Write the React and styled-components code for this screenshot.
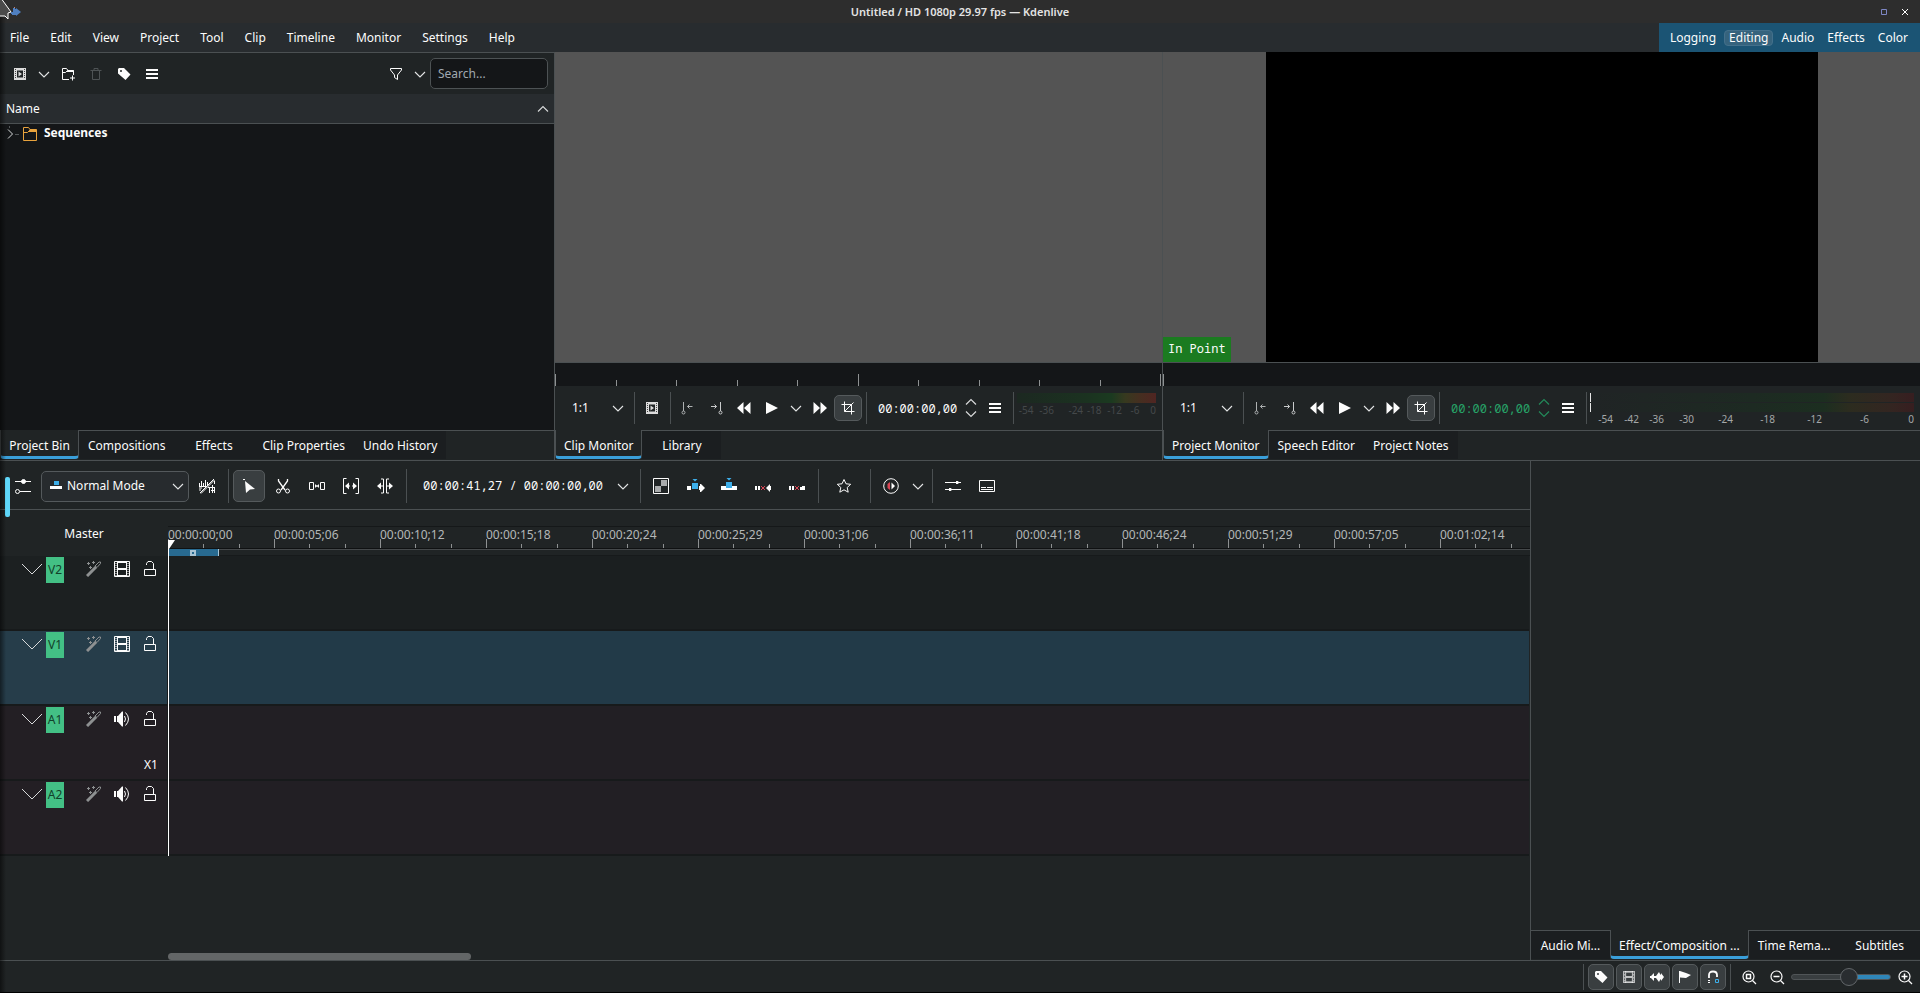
import React from "react";
import styled, { createGlobalStyle, css } from "styled-components";

const colour = {
  window: "#202425",
  header: "#282c2f",
  view: "#141618",
  line: "#4b5052",
  text: "#fcfcfc",
  muted: "#a1a9b1",
  accent: "#3a9fd9",
  green: "#43c085",
};

const mono = '"Noto Sans Mono", "DejaVu Sans Mono", monospace';

const GlobalStyle = createGlobalStyle`
  *, *::before, *::after {
    box-sizing: border-box;
  }
  body {
    margin: 0;
    background: ${colour.window};
    color: ${colour.text};
    font-family: "Noto Sans", sans-serif;
    font-size: 12px;
    line-height: 16px;
  }
  button, input, select {
    margin: 0;
    padding: 0;
    border: none;
    outline: none;
    background: transparent;
    color: inherit;
    font: inherit;
  }
  svg {
    display: block;
    flex: none;
  }
`;

/* ---------- window ---------- */

const Window = styled.div`
  position: relative;
  display: flex;
  flex-direction: column;
  height: 100vh;
  overflow: hidden;
  border-bottom: 1px solid #000;

  &::after {
    content: "";
    position: absolute;
    inset: 0 auto 0 0;
    width: 6px;
    background: linear-gradient(to right, rgba(0, 0, 0, 0.5), transparent);
    pointer-events: none;
  }
`;

const TitleBar = styled.header`
  display: grid;
  grid-template-columns: 1fr auto 1fr;
  align-items: center;
  height: 23px;
  padding: 0 7px;
  background: #2d2d2d;
  flex: none;
`;

const WindowTitle = styled.h1`
  margin: 0;
  font-size: 11px;
  font-weight: 600;
  color: #e4e4e4;
`;

const WindowButtons = styled.div`
  display: flex;
  justify-content: flex-end;
  gap: 5px;
`;

const WindowButton = styled.button`
  display: grid;
  place-items: center;
  width: 16px;
  height: 16px;
  color: ${props => props.$tint || "#fff"};
`;

const Pointer = styled.svg`
  position: absolute;
  top: 0;
  left: 0;
  z-index: 2;
`;

const MenuBar = styled.nav`
  display: flex;
  height: 29px;
  background: ${colour.header};
  flex: none;
`;

const MenuItem = styled.button`
  padding: 0 10px 0 11px;

  &:first-child {
    padding-left: 10px;
  }
`;

const Workspaces = styled.div`
  display: flex;
  align-items: center;
  gap: 3px;
  margin-left: auto;
  padding: 0 7px 0 6px;
  background: #1b5474;
`;

const Workspace = styled.button`
  height: 16px;
  padding: 0 4px;
  border: 1px solid ${props => (props.$active ? "#43708b" : "transparent")};
  border-radius: 4px;
  line-height: 14px;
  background: ${props => (props.$active ? "#36637d" : "transparent")};
`;

/* ---------- shared parts ---------- */

const IconButton = styled.button`
  display: grid;
  place-items: center;
  flex: none;
  width: ${props => props.$width || 28}px;
  height: ${props => props.$height || 26}px;
  border-radius: 5px;
  border: 1px solid transparent;
  color: ${props => props.$tint || colour.text};
  ${props => props.$active && css`
    border-color: #555a5c;
    background: #393e40;
  `}
`;

const Separator = styled.span`
  flex: none;
  width: 1px;
  height: ${props => props.$height || 32}px;
  margin: 0 3px 0 4px;
  background: ${colour.line};
`;

const TabStrip = styled.div`
  display: flex;
  flex: none;
  height: 30px;
  padding-bottom: 1px;
  border-top: 1px solid ${colour.line};
`;

const Tab = styled.button`
  min-width: 79px;
  padding: 1px 9px 0;
  flex: none;
  background: #1b1e20;
  white-space: nowrap;
  ${props => props.$active && css`
    margin-top: -1px;
    padding: 5px 8px 0;
    border: 1px solid ${colour.line};
    border-top: none;
    border-bottom: 3px solid ${colour.accent};
    border-radius: 0 0 4px 4px;
    background: ${colour.window};
  `}
`;

const Combo = styled.label`
  position: relative;
  display: flex;
  align-items: center;
  flex: none;
  width: ${props => props.$width}px;
  height: ${props => (props.$framed ? 31 : 26)}px;
  border-radius: 5px;
  border: 1px solid ${props => (props.$framed ? "#54595c" : "transparent")};
  background: ${props => (props.$framed ? "#272b2e" : "transparent")};

  select {
    width: 100%;
    height: 100%;
    padding-left: ${props => (props.$framed ? 25 : 12)}px;
    appearance: none;
  }
  option {
    background: ${colour.window};
  }
  svg {
    position: absolute;
    pointer-events: none;
  }
  svg:first-child:not(:last-child) {
    left: 6px;
  }
  svg:last-child {
    right: ${props => (props.$framed ? 2 : 3)}px;
  }
`;

/* ---------- icons ---------- */

const Icon = ({size = 16, children, ...rest}) => (
  <svg width={size} height={size} viewBox="0 0 16 16" fill="none" stroke="currentColor" aria-hidden="true" {...rest}>
    {children}
  </svg>
);

const ChevronDown = () => <Icon stroke="#e4e6e7" strokeWidth="1.1"><path d="M3 6l5 5 5-5" /></Icon>;

const SequenceIcon = () => (
  <Icon stroke="none">
    <path fill="#dcdcdc" fillRule="evenodd" d="M2 2h12v12H2zM5 4.5v7h6v-7z" />
    <path fill="#dcdcdc" d="M6.5 5.5 10 8l-3.500 2.500z" />
    <path stroke="#444" strokeDasharray="1 1" d="M3.500 3v10M12.500 3v10" />
  </Icon>
);

const AddFolderIcon = () => (
  <Icon>
    <path d="M9 13.500H2.500v-11h4l1.500 2h5.500V9M2.500 6.500h3l2-2" />
    <path fill="currentColor" stroke="none" d="M7.500 4h6v2h-7z" />
    <path d="M12.500 9.500v5M10 12h5" />
  </Icon>
);

const TrashIcon = () => (
  <Icon><path d="M2.500 4.500h11M6 4.500v-2h4v2M4.500 4.500v9h7v-9" /></Icon>
);

const TagIcon = () => (
  <Icon>
    <path fill="currentColor" stroke="none" fillRule="evenodd" d="M2 3l1-1h5l6.500 6.500-5 5.500L2 7.500zM4 5a1 1 0 1 0 2 0a1 1 0 1 0-2 0z" />
  </Icon>
);

const MenuIcon = () => (
  <Icon fill="currentColor" stroke="none"><path d="M2 3h12v2H2zM2 7h12v2H2zM2 11h12v2H2z" /></Icon>
);

const FilterIcon = () => (
  <Icon><path d="M2.500 2.500h11v1.500L9.500 9v4.500l-3-2V9L2.500 4z" /></Icon>
);

const FolderIcon = () => (
  <Icon stroke="#e8a33d">
    <path d="M1.500 1.500h5l1.500 2h6.500v11h-13z" />
    <path d="M1.500 6.500h4l2-2h7" strokeWidth="1" />
    <path fill="#e8a33d" stroke="none" d="M7.500 3.500h7v2.500h-8z" />
  </Icon>
);

const SetInIcon = () => (
  <Icon stroke="#aeb1b2">
    <path d="M3.500 2v9" /><circle cx="3.500" cy="12.500" r="1.500" />
    <path d="M12.500 6.500h-5M9.500 4.500l-2 2 2 2" />
  </Icon>
);

const SetOutIcon = () => (
  <Icon stroke="#c9cbcc">
    <path d="M12.500 2v9" /><circle cx="12.500" cy="12.500" r="1.500" />
    <path d="M3 6.500h5.500M6.500 4.500l2 2-2 2" />
  </Icon>
);

const RewindIcon = () => (
  <Icon fill="currentColor" stroke="none"><path d="M1 8l6.500-6v12zM8 8l6.500-6v12z" /></Icon>
);

const PlayIcon = () => (
  <Icon fill="currentColor" stroke="none"><path d="M2 2 14 8 2 14z" /></Icon>
);

const ForwardIcon = () => (
  <Icon fill="currentColor" stroke="none"><path d="M15 8 8.500 2v12zM8 8 1.500 2v12z" /></Icon>
);

const CropIcon = () => (
  <Icon><path d="M4.500 1.500v10h10M1.500 4.500h10v10M4.500 11.500l9-9" /></Icon>
);

const StepperIcon = () => (
  <svg width="14" height="20" viewBox="0 0 14 20" fill="none" stroke="currentColor" strokeWidth="1.200" aria-hidden="true">
    <path d="M2 6.500l5-5 5 5M2 13.500l5 5 5-5" />
  </svg>
);

const TrackOptionsIcon = () => (
  <Icon>
    <path d="M0 3.500h16M5 13.500h11" />
    <circle cx="8.500" cy="3.500" r="2" fill="currentColor" />
    <circle cx="2.500" cy="13.500" r="2" />
  </Icon>
);

const NormalModeIcon = () => (
  <Icon stroke="none"><path fill="#3daee9" d="M6 3h5v4H6z" /><path fill="#fff" d="M2 8h12v3H2z" /></Icon>
);

const WaveOffIcon = () => (
  <Icon strokeWidth="1">
    <path d="M.5 5v3M2.500 3v5M4.500 5v3M6.500 2v6M8.500 4v3M0 8.500h8M1 15 15 1M2 15.500 15.500 2M9 9.500h7M10.500 9v6M13.500 7v8M15.500 9v6M12 12.500h3M15.500 3v3" />
    <path d="M0 10h3M0 12h2" />
  </Icon>
);

const SelectIcon = () => (
  <Icon fill="currentColor" stroke="none"><path d="M4 3l10 8-5 .5L5 15zM2 1h2v1H2z" /></Icon>
);

const RazorIcon = () => (
  <Icon>
    <path d="M3.500 1v2l6.500 9M12.500 1v2L6 12" strokeWidth="1.300" />
    <circle cx="3.500" cy="13" r="2" /><circle cx="12.500" cy="13" r="2" />
  </Icon>
);

const SpacerIcon = () => (
  <Icon>
    <path d="M.5 4.500h4v7h-4zM11.500 4.500h4v7h-4zM6 8h4" />
    <path fill="currentColor" stroke="none" d="M6 6l2 2-2 2zM10 6 8 8l2 2z" />
  </Icon>
);

const SlipIcon = () => (
  <Icon>
    <path d="M3.500.5h-3v15h3M12.500.5h3v15h-3M4 8h3M9 8h3" />
    <path fill="currentColor" stroke="none" d="M2 8l4-3.500v7zM14 8l-4-3.500v7z" />
  </Icon>
);

const RippleIcon = () => (
  <Icon>
    <path d="M4 1h2.500v14H4M12 1H9.500v14H12M4 8h2M10 8h2" />
    <path fill="currentColor" stroke="none" d="M0 8l4-3.500v7zM16 8l-4-3.500v7z" />
  </Icon>
);

const CompositeIcon = () => (
  <Icon>
    <path d="M.5.5h15v15H.5z" /><path fill="#a9abac" stroke="none" d="M8 2h6v6H8zM2 8h6v6H2z" />
  </Icon>
);

const InsertIcon = () => (
  <Icon stroke="none" overflow="visible">
    <path fill="#fff" d="M0 8h4v4H0zM12 8h1V6h1l4 4-4 4h-1v-2h-1z" /><path fill="#3daee9" d="M5 5h6v6H5zM5.500 1h5L8 3.500z" />
  </Icon>
);

const OverwriteIcon = () => (
  <Icon stroke="none">
    <path fill="#fff" d="M0 8h16v4H0z" /><path fill="#3daee9" d="M5 4h6v6H5zM5.500 0h5L8 2.500z" />
  </Icon>
);

const ExtractIcon = () => (
  <Icon stroke="none">
    <path fill="#fff" d="M0 8h2v4H0zM3 8h2v4H3zM11 10l4-4v2h1v4h-1v2z" /><path stroke="#da4453" d="M6 8l4 4M10 8l-4 4" />
  </Icon>
);

const LiftIcon = () => (
  <Icon stroke="none">
    <path fill="#fff" d="M0 8h2v4H0zM3 8h2v4H3zM11 9h2V8h3v4h-5z" /><path stroke="#da4453" d="M6 8l4 4M10 8l-4 4" />
  </Icon>
);

const StarIcon = () => (
  <Icon><path d="M8 1.500l2 4.300 4.700.5-3.500 3.200 1 4.700L8 11.800l-4.200 2.400 1-4.700L1.300 6.300 6 5.800z" /></Icon>
);

const PreviewIcon = () => (
  <Icon>
    <circle cx="8" cy="8" r="7.300" />
    <path fill="#da4453" stroke="none" d="M7 4v8L4.500 10V6z" /><path fill="#fff" stroke="none" d="M8.500 4.500 12 8l-3.500 3.500z" />
  </Icon>
);

const MixerIcon = () => (
  <Icon>
    <path d="M0 4.500h16M0 11.500h16" />
    <path fill="currentColor" stroke="none" d="M11 3h2l1 1.500L13 6h-2zM4 10h2l1 1.500L6 13H4z" />
  </Icon>
);

const SubtitleIcon = () => (
  <Icon><path d="M.5 2.500h15v11H.5zM2 9.500h5M8 9.500h6M2 11.500h12" /></Icon>
);

const WandIcon = () => (
  <Icon stroke="#8d9091">
    <path d="M1 15 10 6" strokeWidth="3" /><path d="M9 5l4-4h1.500v1.500L11 6.500z" />
    <path d="M2.500 1v3M1 2.500h3M7.500 0v3M6 1.500h3M4.500 5v3M3 6.500h3" />
  </Icon>
);

const FilmIcon = ({size}) => (
  <Icon size={size}>
    <path d="M.5.500h15v15H.5zM3.500 0v16M12.500 0v16M4 7.500h8M4 8.500h8M4 1.500h8M4 14.500h8" />
    <path d="M2 2v13M14 2v13" strokeDasharray="1 1" />
  </Icon>
);

const SpeakerIcon = () => (
  <Icon>
    <path fill="currentColor" stroke="none" d="M0 5h2v6H0zM3 5h1l4-4.500h1v15H8L4 11H3z" />
    <path d="M10.500 5q2 3 0 6M11.500 1.500q6 6.500 0 13" />
  </Icon>
);

const UnlockIcon = () => (
  <Icon><path d="M2.500 8.500h11v6h-11zM4.500 4V2.500L6 .500h3.500l2 2v6" /></Icon>
);

const WaveformIcon = () => (
  <Icon fill="currentColor" stroke="none">
    <path d="M1 7h1l3-3v3h2v2H5v3L2 9H1zM7 7l3-4 1 2 1 1V4l3 4-3 4v-2l-1 1-1 2-3-4z" />
  </Icon>
);

const FlagIcon = () => (
  <Icon fill="currentColor" stroke="none"><path d="M2 2h1l6 2 5 2-5 3-6-.5V14H2z" /></Icon>
);

const SnapIcon = () => (
  <Icon>
    <path d="M4 9V6q0-3.500 4-3.500T12 6v2" strokeWidth="1.800" /><path d="M3 11.500h2M3 13.500h2" />
    <path stroke="#3daee9" d="M10.500 10.500h3v3h-3z" />
  </Icon>
);

const ZoomIcon = ({mark}) => (
  <Icon>
    <circle cx="7.500" cy="7.500" r="5.500" strokeWidth="1.200" />
    <path d="M11.500 11.500 15 15" strokeWidth="1.300" />
    <path d={mark} strokeWidth="1.500" />
  </Icon>
);

/* ---------- project bin ---------- */

const TopArea = styled.div`
  display: grid;
  grid-template-columns: 555fr 608fr 757fr;
  flex: 409 1 0;
  min-height: 0;
  border-bottom: 1px solid ${colour.line};
`;

const Panel = styled.section`
  display: flex;
  flex-direction: column;
  min-width: 0;
  min-height: 0;
  border-right: 1px solid ${colour.line};

  &:last-child {
    border-right: none;
  }
`;

const BinToolbar = styled.div`
  display: flex;
  align-items: center;
  flex: none;
  height: 42px;
  padding: 0 6px;
  border-top: 1px solid ${colour.line};
`;

const Search = styled.input`
  width: 118px;
  height: 31px;
  padding: 0 7px;
  border: 1px solid #4d5254;
  border-radius: 5px;
  background: ${colour.view};

  &::placeholder {
    color: ${colour.muted};
    opacity: 1;
  }
`;

const Spacer = styled.span`
  flex: 1;
`;

const ColumnHeader = styled.button`
  display: flex;
  align-items: center;
  justify-content: space-between;
  flex: none;
  height: 30px;
  padding: 1px 3px 0 6px;
  border-bottom: 1px solid ${colour.line};
  background: ${colour.header};
`;

const Tree = styled.ul`
  flex: 1;
  margin: 0;
  padding: 0;
  list-style: none;
  background: ${colour.view};
`;

const TreeItem = styled.li`
  display: flex;
  align-items: center;
  gap: 3px;
  height: 20px;
  padding-left: 3px;
  font-weight: 700;

  span {
    padding: 0 0 2px 3px;
  }
`;

/* ---------- monitors ---------- */

const Screen = styled.div`
  display: flex;
  align-items: flex-end;
  flex: 1;
  min-height: 0;
  background: #545454;
`;

const Frame = styled.div`
  width: 73%;
  height: 100%;
  background: #000;
`;

const ScreenSide = styled.div`
  display: flex;
  flex: ${props => props.$grow};
`;

const InPoint = styled.span`
  height: 25px;
  padding: 4px 5px;
  background: #1b7b20;
  font-family: ${mono};
`;

const MonitorRuler = styled.div`
  display: flex;
  align-items: flex-end;
  flex: none;
  height: 24px;
  padding-right: 1px;
  border-top: 1px solid ${colour.line};
  background: ${colour.view};
`;

const RulerStep = styled.span`
  flex: 1;
  height: ${props => (props.$major ? 12 : 6)}px;
  border-left: 1px solid #8e9192;
`;

const RulerEnd = styled.span`
  height: 12px;
  border-left: 1px solid #8e9192;
`;

const MonitorToolbar = styled.div`
  display: flex;
  align-items: center;
  flex: none;
  height: 44px;
  padding: 0 6px 0 4px;
`;

const Timecode = styled.input`
  flex: none;
  width: 91px;
  height: 26px;
  padding-left: 8px;
  font-family: ${mono};
  color: ${props => props.$tint};
`;

const Meter = styled.div`
  flex: 1;
  min-width: 0;
  height: ${props => (props.$stereo ? 33 : 30)}px;
  margin-top: ${props => (props.$stereo ? 2 : 0)}px;
  color: ${props => (props.$stereo ? "#a4a7a8" : "#44484a")};
`;

const MeterBar = styled.div`
  height: ${props => (props.$stereo ? 9 : 10)}px;
  margin-bottom: 1px;
  background: ${props => (props.$stereo
    ? "linear-gradient(to right, #202425, #1d2a22 50%, #1c2e20 72%, #2c2c1f 80%, #332621 92%, #371e20)"
    : "linear-gradient(to right, #1c2821, #1b3220 50%, #1b3a20 68%, #37391f 78%, #452f20 88%, #502522)")};
  border-left: ${props => (props.$stereo ? "1px solid #e6e6e6" : "none")};
`;

const MeterScale = styled.div`
  display: flex;
  font-size: 10px;
  line-height: 13px;
`;

const MeterMark = styled.span`
  flex: ${props => props.$grow} 1 0;
  min-width: 0;
  text-align: right;
  white-space: nowrap;
`;

/* ---------- timeline ---------- */

const BottomArea = styled.div`
  display: grid;
  grid-template-columns: 1530fr 390fr;
  flex: 500 1 0;
  min-height: 0;
  border-bottom: 1px solid ${colour.line};
`;

const Timeline = styled.section`
  position: relative;
  display: flex;
  flex-direction: column;
  min-width: 0;
`;

const FocusMark = styled.span`
  position: absolute;
  top: 16px;
  left: 5px;
  width: 5px;
  height: 40px;
  border-radius: 2px;
  background: #5fd7fa;
`;

const TimelineToolbar = styled.div`
  display: flex;
  align-items: center;
  gap: 2px;
  flex: none;
  height: 49px;
  padding: 2px 0 0 7px;
  border-bottom: 1px solid ${colour.line};

  ${Separator} {
    margin: 0 2px 0 3px;
  }
`;

const Position = styled.button`
  width: 198px;
  height: 32px;
  padding-left: 12px;
  font-family: ${mono};
  text-align: left;
  white-space: pre;
`;

const RulerRow = styled.div`
  display: grid;
  grid-template-columns: 168px 1fr;
  flex: none;
  padding-top: 16px;
`;

const Master = styled.button`
  height: 16px;
`;

const Ruler = styled.div`
  min-width: 0;
  border-top: 1px solid #151819;
`;

const RulerMarks = styled.div`
  display: flex;
  overflow: hidden;
  height: 22px;
  border-bottom: 1px solid #0f1112;
`;

const RulerMark = styled.span`
  flex: none;
  width: 106px;
  height: 21px;
  line-height: 15px;
  color: #b4b7b8;
  background:
    linear-gradient(#8e9192, #8e9192) 0 100% / 1px 9px no-repeat,
    linear-gradient(#8e9192, #8e9192) 35px 100% / 1px 4px no-repeat,
    linear-gradient(#8e9192, #8e9192) 71px 100% / 1px 4px no-repeat;
`;

const ZoneBar = styled.div`
  height: 7px;
  border-top: 1px solid #45494b;
  border-bottom: 1px solid #171a1b;
`;

const Zone = styled.div`
  display: flex;
  align-items: center;
  justify-content: center;
  width: 51px;
  height: 7px;
  margin-top: -1px;
  border-right: 1px solid #a9c4d4;
  background: #286a90;

  &::after {
    content: "";
    width: 6px;
    height: 6px;
    border: 2px solid #a9c4d4;
  }
`;

const Tracks = styled.div`
  position: relative;
  flex: none;
  padding-right: 1px;
`;

const TrackRow = styled.div`
  display: grid;
  grid-template-columns: 167px 1fr;
  gap: 1px;
  height: 75px;
  border-bottom: 2px solid #171a1b;
  background: #171a1b;
`;

const trackFill = {
  video: ["#1c2021", "#1b1f20"],
  active: ["#263d4a", "#223a48"],
  audio: ["#231f24", "#221f24"],
};

const TrackHeader = styled.div`
  display: grid;
  grid-template-columns: 28px 18px 16px 28px 28px 28px;
  grid-template-rows: 27px 1fr;
  padding-left: 18px;
  background: ${props => trackFill[props.$kind][0]};
`;

const TrackLane = styled.div`
  background: ${props => trackFill[props.$kind][1]};
`;

const TrackName = styled.button`
  height: 26px;
  margin-top: 1px;
  background: ${colour.green};
  color: #12402a;
  text-align: center;
`;

const TrackMeta = styled.span`
  grid-column: 6;
  align-self: end;
  padding: 0 0 6px 2px;
  text-align: center;
`;

const Playhead = styled.svg`
  position: absolute;
  top: 79px;
  left: 168px;
`;

const PlayheadLine = styled.span`
  position: absolute;
  top: -8px;
  bottom: 0;
  left: 168px;
  width: 1px;
  background: #fff;
`;

const ScrollBar = styled.div`
  width: 303px;
  height: 7px;
  margin: auto 0 0 168px;
  border-radius: 4px;
  background: #636667;
`;

const EffectPanel = styled.aside`
  display: flex;
  flex-direction: column;
  justify-content: flex-end;
  min-width: 0;
  overflow: hidden;
  border-left: 1px solid ${colour.line};

  ${Tab}:last-child {
    flex: 1;
  }
`;

/* ---------- status bar ---------- */

const StatusBar = styled.footer`
  display: flex;
  align-items: center;
  justify-content: flex-end;
  gap: 2px;
  flex: none;
  height: 31px;
  padding-right: 1px;

  ${Separator} {
    margin: 0 2px;
  }
`;

const ZoomGroup = styled.div`
  display: flex;
  align-items: center;
`;

const ZoomSlider = styled.input`
  width: 100px;
  height: 18px;
  appearance: none;

  &::-webkit-slider-runnable-track {
    height: 6px;
    border-radius: 3px;
    border: 1px solid #505557;
    background: linear-gradient(to right, #393e40 60%, #2f86b8 60%);
  }
  &::-webkit-slider-thumb {
    width: 18px;
    height: 18px;
    margin-top: -7px;
    border: 1px solid #62676a;
    border-radius: 50%;
    background: #292d30;
    appearance: none;
  }
`;

/* ---------- content ---------- */

const menus = ["File", "Edit", "View", "Project", "Tool", "Clip", "Timeline", "Monitor", "Settings", "Help"];
const workspaces = ["Logging", "Editing", "Audio", "Effects", "Color"];

const times = [
  "00:00:00;00", "00:00:05;06", "00:00:10;12", "00:00:15;18", "00:00:20;24", "00:00:25;29", "00:00:31;06",
  "00:00:36;11", "00:00:41;18", "00:00:46;24", "00:00:51;29", "00:00:57;05", "00:01:02;14",
];

const tracks = [
  {name: "V2", kind: "video"},
  {name: "V1", kind: "active"},
  {name: "A1", kind: "audio", meta: "X1"},
  {name: "A2", kind: "audio"},
];

const clipScale = [["-54", 17], ["-36", 21], ["-24", 30], ["-18", 19], ["-12", 21], ["-6", 18], ["0", 17]];
const projectScale = [
  ["-54", 23], ["-42", 26], ["-36", 25], ["-30", 30], ["-24", 39], ["-18", 42], ["-12", 47], ["-6", 47], ["0", 45],
];

const Tabs = ({items, active}) => (
  <TabStrip role="tablist">
    {items.map(item => (
      <Tab key={item} role="tab" aria-selected={item === active} $active={item === active}>{item}</Tab>
    ))}
  </TabStrip>
);

const AudioMeter = ({scale, stereo}) => (
  <Meter $stereo={stereo}>
    <MeterBar $stereo={stereo} />
    {stereo && <MeterBar $stereo />}
    <MeterScale>
      {scale.map(([mark, grow]) => <MeterMark key={mark} $grow={grow}>{mark}</MeterMark>)}
    </MeterScale>
  </Meter>
);

const MonitorControls = ({clip}) => (
  <MonitorToolbar>
    <Combo $width={clip ? 71 : 72}>
      <select aria-label="Monitor zoom"><option>1:1</option></select>
      <ChevronDown />
    </Combo>
    <Separator />
    {clip && <IconButton aria-label="Clip type"><SequenceIcon /></IconButton>}
    {clip && <Separator />}
    <IconButton aria-label="Set zone in"><SetInIcon /></IconButton>
    <IconButton aria-label="Set zone out"><SetOutIcon /></IconButton>
    <IconButton aria-label="Rewind"><RewindIcon /></IconButton>
    <IconButton aria-label="Play"><PlayIcon /></IconButton>
    <IconButton aria-label="Play options" $width={20}><ChevronDown /></IconButton>
    <IconButton aria-label="Forward"><ForwardIcon /></IconButton>
    <IconButton aria-label="Edit mode" $active><CropIcon /></IconButton>
    <Separator />
    <Timecode aria-label="Timecode" defaultValue="00:00:00,00" $tint={clip ? colour.text : "#27a368"} />
    <IconButton aria-label="Step timecode" $width={20} $tint={clip ? "#d8dadb" : "#238a5a"}><StepperIcon /></IconButton>
    <IconButton aria-label="Monitor menu"><MenuIcon /></IconButton>
    <Separator />
    <AudioMeter scale={clip ? clipScale : projectScale} stereo={!clip} />
  </MonitorToolbar>
);

const ProjectBin = () => (
  <Panel>
    <BinToolbar>
      <IconButton aria-label="Add clip"><SequenceIcon /></IconButton>
      <IconButton aria-label="Add clip options" $width={20}><ChevronDown /></IconButton>
      <IconButton aria-label="Create folder"><AddFolderIcon /></IconButton>
      <IconButton aria-label="Delete" $tint="#4e5355" disabled><TrashIcon /></IconButton>
      <IconButton aria-label="Tags"><TagIcon /></IconButton>
      <IconButton aria-label="Bin menu"><MenuIcon /></IconButton>
      <Spacer />
      <IconButton aria-label="Filter"><FilterIcon /></IconButton>
      <IconButton aria-label="Filter options" $width={20}><ChevronDown /></IconButton>
      <Search aria-label="Search" placeholder="Search..." />
    </BinToolbar>
    <ColumnHeader>
      Name
      <Icon stroke="#d8dadb" strokeWidth="1.100"><path d="M3 10.500l5-5 5 5" /></Icon>
    </ColumnHeader>
    <Tree>
      <TreeItem>
        <Icon stroke="#d8dadb">
          <path d="M5 3.500 9.500 8 5 12.500" />
          <path stroke="#54585a" d="M12 8.500h4M6.500-2v4" />
        </Icon>
        <FolderIcon />
        <span>Sequences</span>
      </TreeItem>
    </Tree>
    <Tabs items={["Project Bin", "Compositions", "Effects", "Clip Properties", "Undo History"]} active="Project Bin" />
  </Panel>
);

const ClipMonitor = () => (
  <Panel>
    <Screen />
    <MonitorRuler>
      {[1, 0, 0, 0, 0, 1, 0, 0, 0, 0].map((major, i) => <RulerStep key={i} $major={major} />)}
      <RulerEnd />
    </MonitorRuler>
    <MonitorControls clip />
    <Tabs items={["Clip Monitor", "Library"]} active="Clip Monitor" />
  </Panel>
);

const ProjectMonitor = () => (
  <Panel>
    <Screen>
      <ScreenSide $grow={103}><InPoint>In Point</InPoint></ScreenSide>
      <Frame />
      <ScreenSide $grow={102} />
    </Screen>
    <MonitorRuler><RulerEnd /></MonitorRuler>
    <MonitorControls />
    <Tabs items={["Project Monitor", "Speech Editor", "Project Notes"]} active="Project Monitor" />
  </Panel>
);

const ToolButton = ({label, ...rest}) => <IconButton aria-label={label} $width={32} $height={32} {...rest} />;

const TimelineTools = () => (
  <TimelineToolbar>
    <ToolButton label="Track options"><TrackOptionsIcon /></ToolButton>
    <Combo $width={148} $framed>
      <NormalModeIcon />
      <select aria-label="Edit mode"><option>Normal Mode</option></select>
      <ChevronDown />
    </Combo>
    <ToolButton label="Toggle thumbnails"><WaveOffIcon /></ToolButton>
    <Separator $height={34} />
    <ToolButton label="Selection tool" $active><SelectIcon /></ToolButton>
    <ToolButton label="Razor tool"><RazorIcon /></ToolButton>
    <ToolButton label="Spacer tool"><SpacerIcon /></ToolButton>
    <ToolButton label="Slip tool"><SlipIcon /></ToolButton>
    <ToolButton label="Ripple tool"><RippleIcon /></ToolButton>
    <Separator $height={34} />
    <Position>00:00:41,27 / 00:00:00,00</Position>
    <ToolButton label="Timecode options" $width={24}><ChevronDown /></ToolButton>
    <Separator $height={34} />
    <ToolButton label="Track compositing"><CompositeIcon /></ToolButton>
    <ToolButton label="Insert zone"><InsertIcon /></ToolButton>
    <ToolButton label="Overwrite zone"><OverwriteIcon /></ToolButton>
    <ToolButton label="Extract zone"><ExtractIcon /></ToolButton>
    <ToolButton label="Lift zone"><LiftIcon /></ToolButton>
    <Separator $height={34} />
    <ToolButton label="Favorite effects" $width={42}><StarIcon /></ToolButton>
    <Separator $height={34} />
    <ToolButton label="Preview render"><PreviewIcon /></ToolButton>
    <ToolButton label="Preview options" $width={18}><ChevronDown /></ToolButton>
    <Separator $height={34} />
    <ToolButton label="Audio mixer"><MixerIcon /></ToolButton>
    <ToolButton label="Subtitles"><SubtitleIcon /></ToolButton>
  </TimelineToolbar>
);

const Track = ({name, kind, meta}) => (
  <TrackRow>
    <TrackHeader $kind={kind}>
      <IconButton aria-label="Collapse track">
        <svg width="20" height="12" viewBox="0 0 20 12" fill="none" stroke="#d8dadb" aria-hidden="true">
          <path d="M0 1l10 10L20 1" />
        </svg>
      </IconButton>
      <TrackName>{name}</TrackName>
      <span />
      <IconButton aria-label="Track effects"><WandIcon /></IconButton>
      <IconButton aria-label={kind === "audio" ? "Mute" : "Hide"}>
        {kind === "audio" ? <SpeakerIcon /> : <FilmIcon />}
      </IconButton>
      <IconButton aria-label="Lock track"><UnlockIcon /></IconButton>
      {meta && <TrackMeta>{meta}</TrackMeta>}
    </TrackHeader>
    <TrackLane $kind={kind} />
  </TrackRow>
);

const StatusButton = ({label, children}) => (
  <IconButton aria-label={label} aria-pressed="true" $width={26} $active>{children}</IconButton>
);

export default function App() {
  return (
    <>
      <GlobalStyle />
      <Window>
        <Pointer width="24" height="20" viewBox="0 0 24 20" aria-hidden="true">
          <path fill="#4f7fc0" d="M11 12h2V8h2v1h1V8l5 4-5 4v-1h-4v-1h-1z" />
          <path fill="#d08060" d="M14 7h1v1h-1z" />
          <path fill="#4a4a4a" stroke="#fff" d="M-2-6 11 12l-3 1v6l-3-3H-2z" />
        </Pointer>
        <TitleBar>
          <span />
          <WindowTitle>Untitled / HD 1080p 29.97 fps — Kdenlive</WindowTitle>
          <WindowButtons>
            <WindowButton aria-label="Maximize" $tint="#7d86c4">
              <svg width="6" height="6" viewBox="0 0 6 6" fill="none" stroke="currentColor"><path d="M.5.5h5v5h-5z" /></svg>
            </WindowButton>
            <WindowButton aria-label="Close">
              <svg width="6" height="6" viewBox="0 0 6 6" stroke="currentColor"><path d="M0 0l6 6M6 0 0 6" /></svg>
            </WindowButton>
          </WindowButtons>
        </TitleBar>
        <MenuBar>
          {menus.map(menu => <MenuItem key={menu}>{menu}</MenuItem>)}
          <Workspaces>
            {workspaces.map(name => <Workspace key={name} $active={name === "Editing"}>{name}</Workspace>)}
          </Workspaces>
        </MenuBar>
        <TopArea>
          <ProjectBin />
          <ClipMonitor />
          <ProjectMonitor />
        </TopArea>
        <BottomArea>
          <Timeline>
            <TimelineTools />
            <FocusMark />
            <RulerRow>
              <Master>Master</Master>
              <Ruler>
                <RulerMarks>
                  {times.map(time => <RulerMark key={time}>{time}</RulerMark>)}
                </RulerMarks>
                <ZoneBar><Zone /></ZoneBar>
              </Ruler>
            </RulerRow>
            <Playhead width="8" height="10" viewBox="0 0 8 10" aria-hidden="true">
              <path fill="#fff" d="M0 0h7L1 9v1H0z" />
            </Playhead>
            <Tracks>
              {tracks.map(track => <Track key={track.name} {...track} />)}
              <PlayheadLine />
            </Tracks>
            <ScrollBar />
          </Timeline>
          <EffectPanel>
            <Tabs items={["Audio Mi...", "Effect/Composition ...", "Time Rema...", "Subtitles"]} active="Effect/Composition ..." />
          </EffectPanel>
        </BottomArea>
        <StatusBar>
          <Separator $height={26} />
          <StatusButton label="Color tags"><TagIcon /></StatusButton>
          <StatusButton label="Video thumbnails"><FilmIcon size={12} /></StatusButton>
          <StatusButton label="Audio thumbnails"><WaveformIcon /></StatusButton>
          <StatusButton label="Markers"><FlagIcon /></StatusButton>
          <StatusButton label="Snap"><SnapIcon /></StatusButton>
          <Separator $height={26} />
          <ZoomGroup>
            <IconButton aria-label="Fit zoom"><ZoomIcon mark="M5.500 5.500h4v4h-4z" /></IconButton>
            <IconButton aria-label="Zoom out"><ZoomIcon mark="M4.500 7.500h6" /></IconButton>
            <ZoomSlider type="range" aria-label="Timeline zoom" min="0" max="100" defaultValue="60" />
            <IconButton aria-label="Zoom in"><ZoomIcon mark="M4.500 7.500h6M7.500 4.500v6" /></IconButton>
          </ZoomGroup>
        </StatusBar>
      </Window>
    </>
  );
}
